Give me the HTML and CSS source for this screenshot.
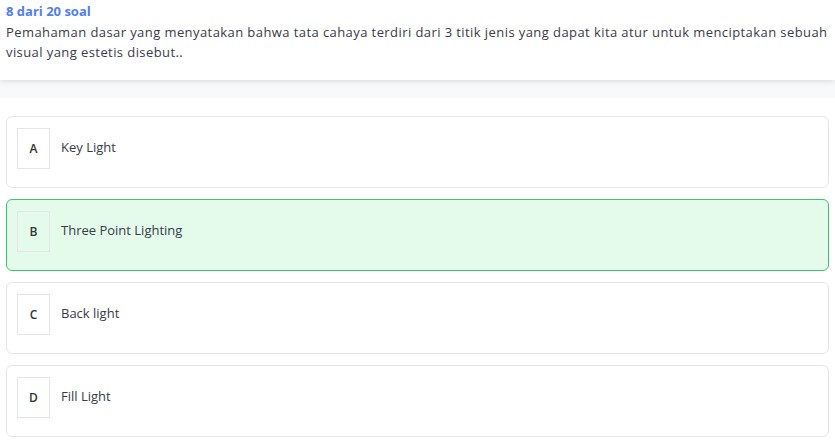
FILE: index.html
```html
<!DOCTYPE html>
<html lang="id">
<head>
    <meta charset="UTF-8">
    <meta name="viewport" content="width=device-width, initial-scale=1.0">
    <title>Soal 8</title>
    <link rel="stylesheet" href="styles.css">
</head>
<body>
    <div class="question-header">
        <div class="question-count">8 dari 20 soal</div>
        <p class="question-text">Pemahaman dasar yang menyatakan bahwa tata cahaya terdiri dari 3 titik jenis yang dapat kita atur untuk menciptakan sebuah visual yang estetis disebut..</p>
    </div>

    <div class="spacer"></div>

    <div class="options">
        <div class="option">
            <div class="option-letter">A</div>
            <div class="option-label">Key Light</div>
        </div>
        <div class="option selected">
            <div class="option-letter">B</div>
            <div class="option-label">Three Point Lighting</div>
        </div>
        <div class="option">
            <div class="option-letter">C</div>
            <div class="option-label">Back light</div>
        </div>
        <div class="option">
            <div class="option-letter">D</div>
            <div class="option-label">Fill Light</div>
        </div>
    </div>
</body>
</html>
```

FILE: styles.css
```css
body {
    margin: 0;
    font-family: "Open Sans", Arial, sans-serif;
    color: #3a3a4a;
    background-color: #fff;
}

.question-header {
    background-color: #fff;
    padding: 3px 6px 0 6px;
    height: 77px;
    box-shadow: 0 2px 5px rgba(0,0,0,0.1);
    position: relative;
}

.question-count {
    font-size: 13px;
    font-weight: 700;
    color: #4f7ef2;
    line-height: 16px;
}

.question-text {
    margin: 3px 0 0 0;
    font-size: 13px;
    line-height: 20px;
    letter-spacing: 0.42px;
    max-width: 822px;
}

.spacer {
    height: 18px;
    background-color: #f8f9fa;
}

.options {
    display: flex;
    flex-direction: column;
    gap: 11px;
    padding: 18px 6px 8px 6px;
}

.option {
    display: flex;
    align-items: flex-start;
    gap: 11px;
    height: 72px;
    box-sizing: border-box;
    padding: 11px 10px;
    border: 1px solid #e6e6e6;
    border-radius: 6px;
    background-color: #fff;
}

.option.selected {
    background-color: #e4fbec;
    border-color: #3cc56f;
}

.option-letter {
    width: 33px;
    height: 41px;
    box-sizing: border-box;
    border: 1px solid #e6e6e6;
    display: flex;
    align-items: center;
    justify-content: center;
    font-size: 12px;
    font-weight: 600;
    color: #333;
}

.option-label {
    font-size: 13px;
    line-height: 20px;
    padding-top: 9px;
}
```
